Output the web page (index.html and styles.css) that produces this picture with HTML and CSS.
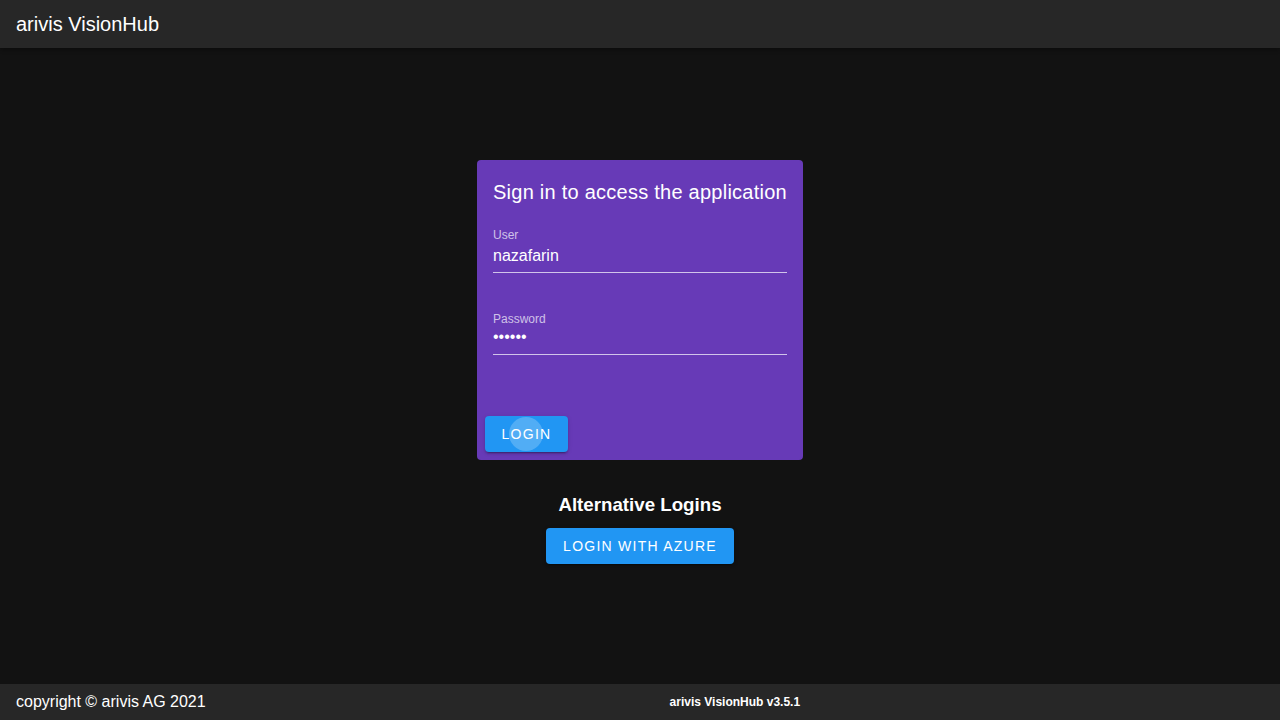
FILE: index.html
```html
<!DOCTYPE html>
<html>
<head>
<meta charset="utf-8">
<link rel="stylesheet" href="styles.css">
</head>
<body>
<header class="topbar"><span class="brand">arivis VisionHub</span></header>
<main class="content">
  <div class="card">
    <div class="card-title">Sign in to access the application</div>
    <div class="field">
      <label class="field-label">User</label>
      <div class="field-value">nazafarin</div>
    </div>
    <div class="field field-pw">
      <label class="field-label">Password</label>
      <div class="field-value dots">••••••</div>
    </div>
    <div class="card-actions">
      <button class="btn btn-login"><span class="ripple"></span>LOGIN</button>
    </div>
  </div>
  <h2 class="alt-title">Alternative Logins</h2>
  <button class="btn btn-azure">LOGIN WITH AZURE</button>
</main>
<footer class="footer">
  <span class="copy">copyright © arivis AG 2021</span>
  <span class="version">arivis VisionHub v3.5.1</span>
</footer>
</body>
</html>
```
FILE: styles.css
```css
html, body { margin: 0; padding: 0; height: 100%; }
body {
  background: #121212;
  color: #fff;
  font-family: "Liberation Sans", Arial, sans-serif;
  display: flex;
  flex-direction: column;
  height: 720px;
}
.topbar {
  height: 48px;
  background: #272727;
  display: flex;
  align-items: center;
  padding: 0 16px;
  box-shadow: 0 2px 4px rgba(0,0,0,0.3);
}
.brand { font-size: 20px; }
.content {
  flex: 1;
  display: flex;
  flex-direction: column;
  align-items: center;
  padding-top: 112px;
}
.card {
  width: 326px;
  height: 300px;
  box-sizing: border-box;
  background: #673ab7;
  border-radius: 4px;
  display: flex;
  flex-direction: column;
}
.card-title {
  font-size: 20px;
  padding: 20px 16px 0;
  line-height: 24px;
  letter-spacing: 0.25px;
}
.field {
  margin: 24px 16px 0;
  border-bottom: 1px solid rgba(255,255,255,0.7);
  padding-bottom: 6px;
}
.field-pw { margin-top: 39px; }
.field-label {
  display: block;
  font-size: 12px;
  color: rgba(255,255,255,0.7);
  line-height: 14px;
}
.field-value {
  font-size: 16px;
  line-height: 20px;
  margin-top: 4px;
}
.dots { font-size: 16px; line-height: 18px; margin-top: 2px; padding-bottom: 2px; }
.card-actions {
  margin-top: auto;
  padding: 8px;
}
.btn {
  border: none;
  border-radius: 4px;
  background: #2196f3;
  color: #fff;
  font-family: "Liberation Sans", Arial, sans-serif;
  font-size: 14px;
  font-weight: normal;
  letter-spacing: 1.25px;
  height: 36px;
  padding: 0 16px;
  box-shadow: 0 3px 1px -2px rgba(0,0,0,.2), 0 2px 2px 0 rgba(0,0,0,.14), 0 1px 5px 0 rgba(0,0,0,.12);
}
.btn-login {
  position: relative;
  overflow: hidden;
  width: 83px;
}
.ripple {
  position: absolute;
  left: 24px;
  top: 1px;
  width: 34px;
  height: 34px;
  border-radius: 50%;
  background: rgba(255,255,255,0.22);
}
.alt-title {
  font-size: 18.72px;
  font-weight: bold;
  margin: 34px 0 12px;
  line-height: 22px;
}
.btn-azure { width: 188px; }
.footer {
  height: 36px;
  background: #272727;
  display: flex;
  align-items: center;
  padding: 0 16px;
}
.copy { font-size: 16px; }
.version {
  flex: 1;
  text-align: center;
  font-size: 12px;
  font-weight: bold;
}
```
